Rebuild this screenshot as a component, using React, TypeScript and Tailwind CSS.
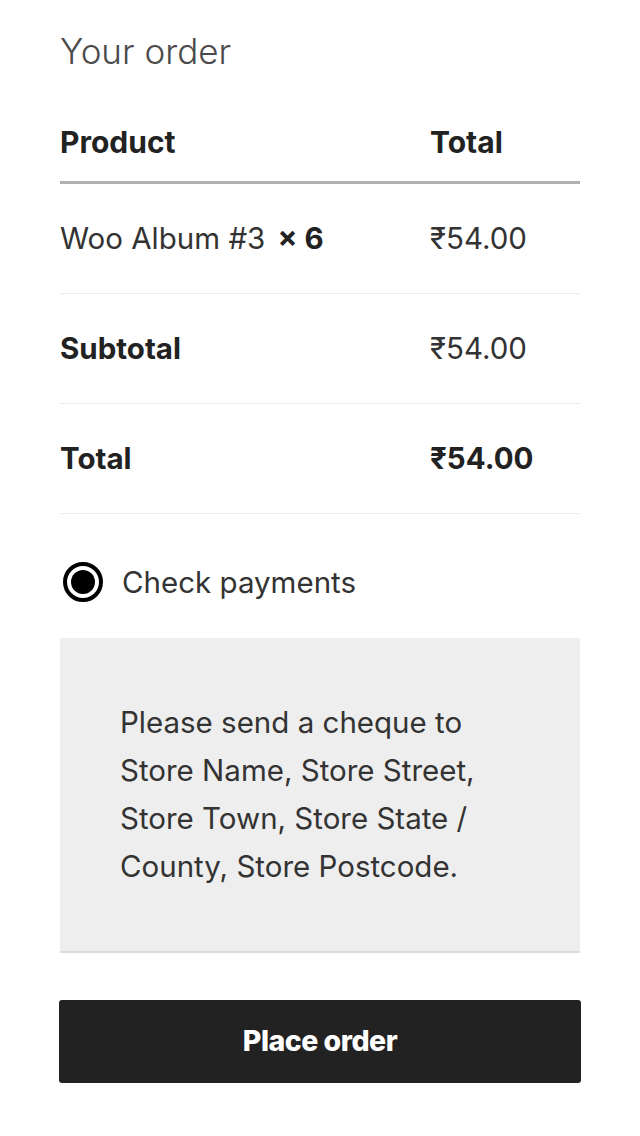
import React from "react";

const font = { fontFamily: "Inter, 'Noto Sans', sans-serif" };

export default function App() {
  return (
    <div className="min-h-[1136px] w-[640px] bg-white text-[#333]" style={font}>
      <div className="mx-[60px] w-[520px] pt-[31px]">
        <h3 className="text-[35px] font-light leading-[40px] text-[#4a4a4a]">Your order</h3>

        <div className="grid grid-cols-[370px_1fr] border-b-[3px] border-[#b0b0b0] pt-[56px] pb-[24px] text-[30px] font-bold leading-[30px] text-[#222]">
          <div>Product</div>
          <div>Total</div>
        </div>

        <div className="grid h-[110px] grid-cols-[370px_1fr] items-center border-b border-[#ebebeb] text-[29.5px]">
          <div>
            Woo Album #3 <strong className="ml-[4px] font-bold text-[#222]">× 6</strong>
          </div>
          <div>₹54.00</div>
        </div>

        <div className="grid h-[110px] grid-cols-[370px_1fr] items-center border-b border-[#ebebeb] text-[29.5px]">
          <div className="font-bold text-[#222]">Subtotal</div>
          <div>₹54.00</div>
        </div>

        <div className="grid h-[110px] grid-cols-[370px_1fr] items-center border-b border-[#ebebeb] text-[29.5px]">
          <div className="font-bold text-[#222]">Total</div>
          <div className="font-bold text-[#222]">₹54.00</div>
        </div>

        <div className="mt-[48px] ml-[3px] flex items-center gap-[19px]">
          <div className="flex h-[40px] w-[40px] items-center justify-center rounded-full border-[4px] border-black bg-white">
            <div className="h-[24px] w-[24px] rounded-full bg-black" />
          </div>
          <span className="text-[29.5px] leading-[40px]">Check payments</span>
        </div>

        <div className="mt-[36px] border-b-2 border-[#dcdcdc] bg-[#eeeeee] px-[60px] pt-[60px] pb-[61px]">
          <p className="max-w-[380px] text-[29.5px] leading-[48px] text-[#333]">
            Please send a cheque to Store Name, Store Street, Store Town, Store State / County, Store Postcode.
          </p>
        </div>

        <button className="mt-[47px] flex h-[83px] w-[522px] -ml-[1px] items-center justify-center rounded-[3px] bg-[#222222] text-[28.5px] font-extrabold tracking-[-0.5px] text-white">
          Place order
        </button>
      </div>
    </div>
  );
}
